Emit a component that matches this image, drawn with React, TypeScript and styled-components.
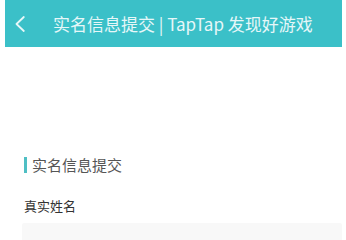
import React from 'react';
import styled, { createGlobalStyle } from 'styled-components';

const GlobalStyle = createGlobalStyle`
  html, body {
    margin: 0;
    padding: 0;
    background: #ffffff;
    font-family: "Noto Sans CJK SC", "Noto Sans", sans-serif;
  }
`;

const Page = styled.div`
  width: 346px;
  height: 240px;
  overflow: hidden;
  padding: 0 4px 0 5px;
  box-sizing: border-box;
`;

const TopBar = styled.header`
  height: 47px;
  background: #3bc0c8;
  display: flex;
  align-items: center;
  padding-left: 10px;
`;

const BackButton = styled.span`
  width: 10px;
  height: 16px;
  display: flex;
  align-items: center;
  margin-right: 28px;
`;

const TopTitle = styled.h1`
  margin: 0;
  font-size: 17px;
  font-weight: 400;
  line-height: 22px;
  color: #e6f7f8;
  white-space: nowrap;
`;

const Form = styled.section`
  padding: 108px 0 0 17px;
  display: flex;
  flex-direction: column;
`;

const SectionTitle = styled.h2`
  margin: 0 0 0 2px;
  display: flex;
  align-items: center;
  gap: 5px;
  font-size: 15px;
  font-weight: 400;
  line-height: 20px;
  color: #555555;

  &::before {
    content: '';
    width: 3px;
    height: 16px;
    background: #4fbfc4;
  }
`;

const FieldLabel = styled.label`
  margin: 22px 0 0 2px;
  font-size: 13px;
  line-height: 18px;
  color: #333333;
`;

const TextInput = styled.div`
  margin-top: 8px;
  height: 40px;
  background: #f8f8f8;
  border-radius: 2px;
`;

const App: React.FC = () => {
  return (
    <Page>
      <GlobalStyle />
      <TopBar>
        <BackButton>
          <svg width="10" height="16" viewBox="0 0 10 16" fill="none">
            <path d="M8.8 1 L1.5 8 L8.8 15" stroke="#e6f7f8" strokeWidth="1.8" strokeLinecap="round" strokeLinejoin="round" />
          </svg>
        </BackButton>
        <TopTitle>实名信息提交 | TapTap 发现好游戏</TopTitle>
      </TopBar>
      <Form>
        <SectionTitle>实名信息提交</SectionTitle>
        <FieldLabel>真实姓名</FieldLabel>
        <TextInput />
      </Form>
    </Page>
  );
};

export default App;
